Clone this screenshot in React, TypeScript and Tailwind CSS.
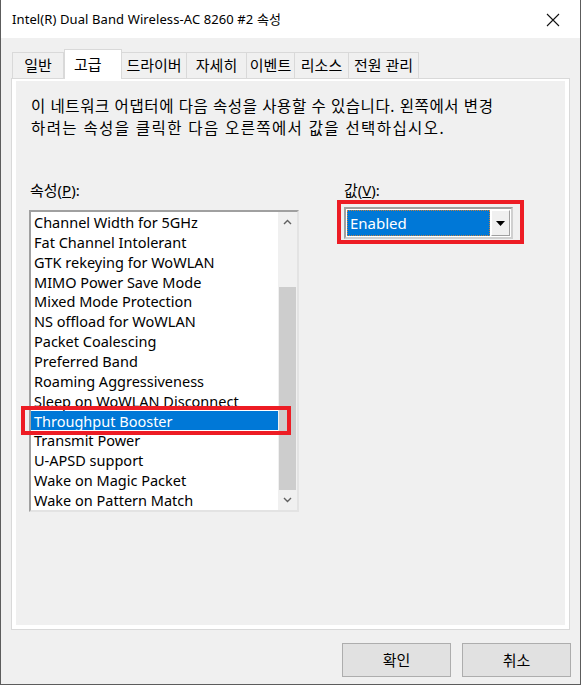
import React from 'react'

const FONT = '"Noto Sans", "Noto Sans CJK KR", sans-serif'

const tabs = [
  { label: '일반', w: 52 },
  { label: '고급', w: 58, active: true },
  { label: '드라이버', w: 66 },
  { label: '자세히', w: 61 },
  { label: '이벤트', w: 49 },
  { label: '리소스', w: 55 },
  { label: '전원 관리', w: 71 },
]

const props = [
  'Channel Width for 5GHz',
  'Fat Channel Intolerant',
  'GTK rekeying for WoWLAN',
  'MIMO Power Save Mode',
  'Mixed Mode Protection',
  'NS offload for WoWLAN',
  'Packet Coalescing',
  'Preferred Band',
  'Roaming Aggressiveness',
  'Sleep on WoWLAN Disconnect',
  'Throughput Booster',
  'Transmit Power',
  'U-APSD support',
  'Wake on Magic Packet',
  'Wake on Pattern Match',
]

export default function App() {
  return (
    <div
      className="relative w-[581px] h-[685px] bg-[#f0f0f0] border-l border-r border-b border-[#5c5c5c] flex flex-col text-[#000] overflow-hidden"
      style={{ fontFamily: FONT }}
    >
      {/* title bar */}
      <div className="h-[38px] bg-white flex items-center justify-between pl-[11px] pr-[20px] shrink-0">
        <span className="text-[13px] tracking-[0.1px] leading-none">Intel(R) Dual Band Wireless-AC 8260 #2 속성</span>
        <svg width="14" height="14" viewBox="0 0 14 14" className="mt-[2px]">
          <path d="M1 1 L13 13 M13 1 L1 13" stroke="#111" strokeWidth="1.1" />
        </svg>
      </div>

      {/* tabs */}
      <div className="flex items-end pl-[11px] mt-[11px] h-[29px] relative z-10 shrink-0">
        {tabs.map(t =>
          t.active ? (
            <div key={t.label}
              className="h-[30px] -mb-px bg-white border-t border-l border-r border-[#d9d9d9] flex items-start pt-[3px] pl-[9px] text-[15px]"
              style={{ width: t.w }}>
              {t.label}
            </div>
          ) : (
            <div key={t.label}
              className="h-[26px] bg-[#f0f0f0] border-t border-l border-r border-[#d9d9d9] flex items-center justify-center text-[15px] -ml-px first:ml-0"
              style={{ width: t.w }}>
              {t.label}
            </div>
          )
        )}
      </div>

      {/* tab panel */}
      <div className="mx-[10px] h-[552px] border border-[#d9d9d9] bg-white pt-[2px] px-[4px] pb-[4px] flex shrink-0">
        <div className="flex-1 bg-[#f0f0f0] flex flex-col pl-[15px] pt-[14px]">
          <p className="text-[15.5px] leading-[22px] tracking-[0.6px] whitespace-nowrap">
            이 네트워크 어댑터에 다음 속성을 사용할 수 있습니다. 왼쪽에서 변경<br />
            <span className="tracking-[1.4px]">하려는 속성을 클릭한 다음 오른쪽에서 값을 선택하십시오.</span>
          </p>

          <div className="flex mt-[40px]">
            {/* left column */}
            <div className="flex flex-col">
              <div className="text-[15px] leading-[22px] -ml-[1px]">속성(<span className="underline">P</span>):</div>
              <div className="mt-[9px] -ml-[2px] w-[270px] h-[302px] border-t-2 border-l-2 border-t-[#a0a0a0] border-l-[#a0a0a0] border-b-2 border-r-2 border-b-[#e3e3e3] border-r-[#e3e3e3] bg-white flex">
                <div className="flex-1 flex flex-col">
                  {props.map(p => (
                    <div key={p}
                      className={`h-[20px] leading-[20px] pl-[3px] text-[14.5px] whitespace-nowrap overflow-hidden ${p === 'Throughput Booster' ? 'bg-[#0078d7] text-white' : ''}`}>
                      {p}
                    </div>
                  ))}
                </div>
                <div className="w-[19px] bg-[#f0f0f0] flex flex-col">
                  <div className="h-[75px] flex justify-center pt-[7px]">
                    <svg width="9" height="6" viewBox="0 0 9 6"><path d="M1 5 L4.5 1.5 L8 5" stroke="#606060" strokeWidth="1.4" fill="none" /></svg>
                  </div>
                  <div className="flex-1 bg-[#cdcdcd] mx-[1px]" />
                  <div className="h-[20px] flex justify-center items-center">
                    <svg width="9" height="6" viewBox="0 0 9 6"><path d="M1 1 L4.5 4.5 L8 1" stroke="#606060" strokeWidth="1.4" fill="none" /></svg>
                  </div>
                </div>
              </div>
            </div>

            {/* right column */}
            <div className="flex flex-col ml-[45px]">
              <div className="text-[15px] leading-[22px]">값(<span className="underline">V</span>):</div>
              <div className="mt-[6px] w-[169px] h-[32px] border-2 border-t-[#a0a0a0] border-l-[#a0a0a0] border-b-[#cfcfcf] border-r-[#cfcfcf] bg-white flex p-[1px]">
                <div className="flex-1 bg-[#0078d7] text-white text-[15px] leading-[24px] pl-[2px] border border-dotted border-[#c08040]">Enabled</div>
                <div className="w-[19px] bg-[#f0f0f0] border border-t-white border-l-white border-b-[#a0a0a0] border-r-[#a0a0a0] flex items-center justify-center ml-[1px]">
                  <svg width="9" height="5" viewBox="0 0 9 5"><path d="M0 0 H9 L4.5 5 Z" fill="#000" /></svg>
                </div>
              </div>
            </div>
          </div>
        </div>
      </div>

      {/* buttons */}
      <div className="flex justify-end gap-[11px] pr-[9px] mt-[13px]">
        <button className="w-[109px] h-[34px] bg-[#e1e1e1] border border-[#adadad] text-[15px]">확인</button>
        <button className="w-[109px] h-[34px] bg-[#e1e1e1] border border-[#adadad] text-[15px]">취소</button>
      </div>

      {/* red highlight boxes */}
      <div className="absolute left-[20px] top-[406px] w-[270px] h-[29px] border-[4px] border-[#ed1c24] pointer-events-none" />
      <div className="absolute left-[336px] top-[200px] w-[187px] h-[44px] border-[4px] border-[#ed1c24] pointer-events-none" />
    </div>
  )
}
